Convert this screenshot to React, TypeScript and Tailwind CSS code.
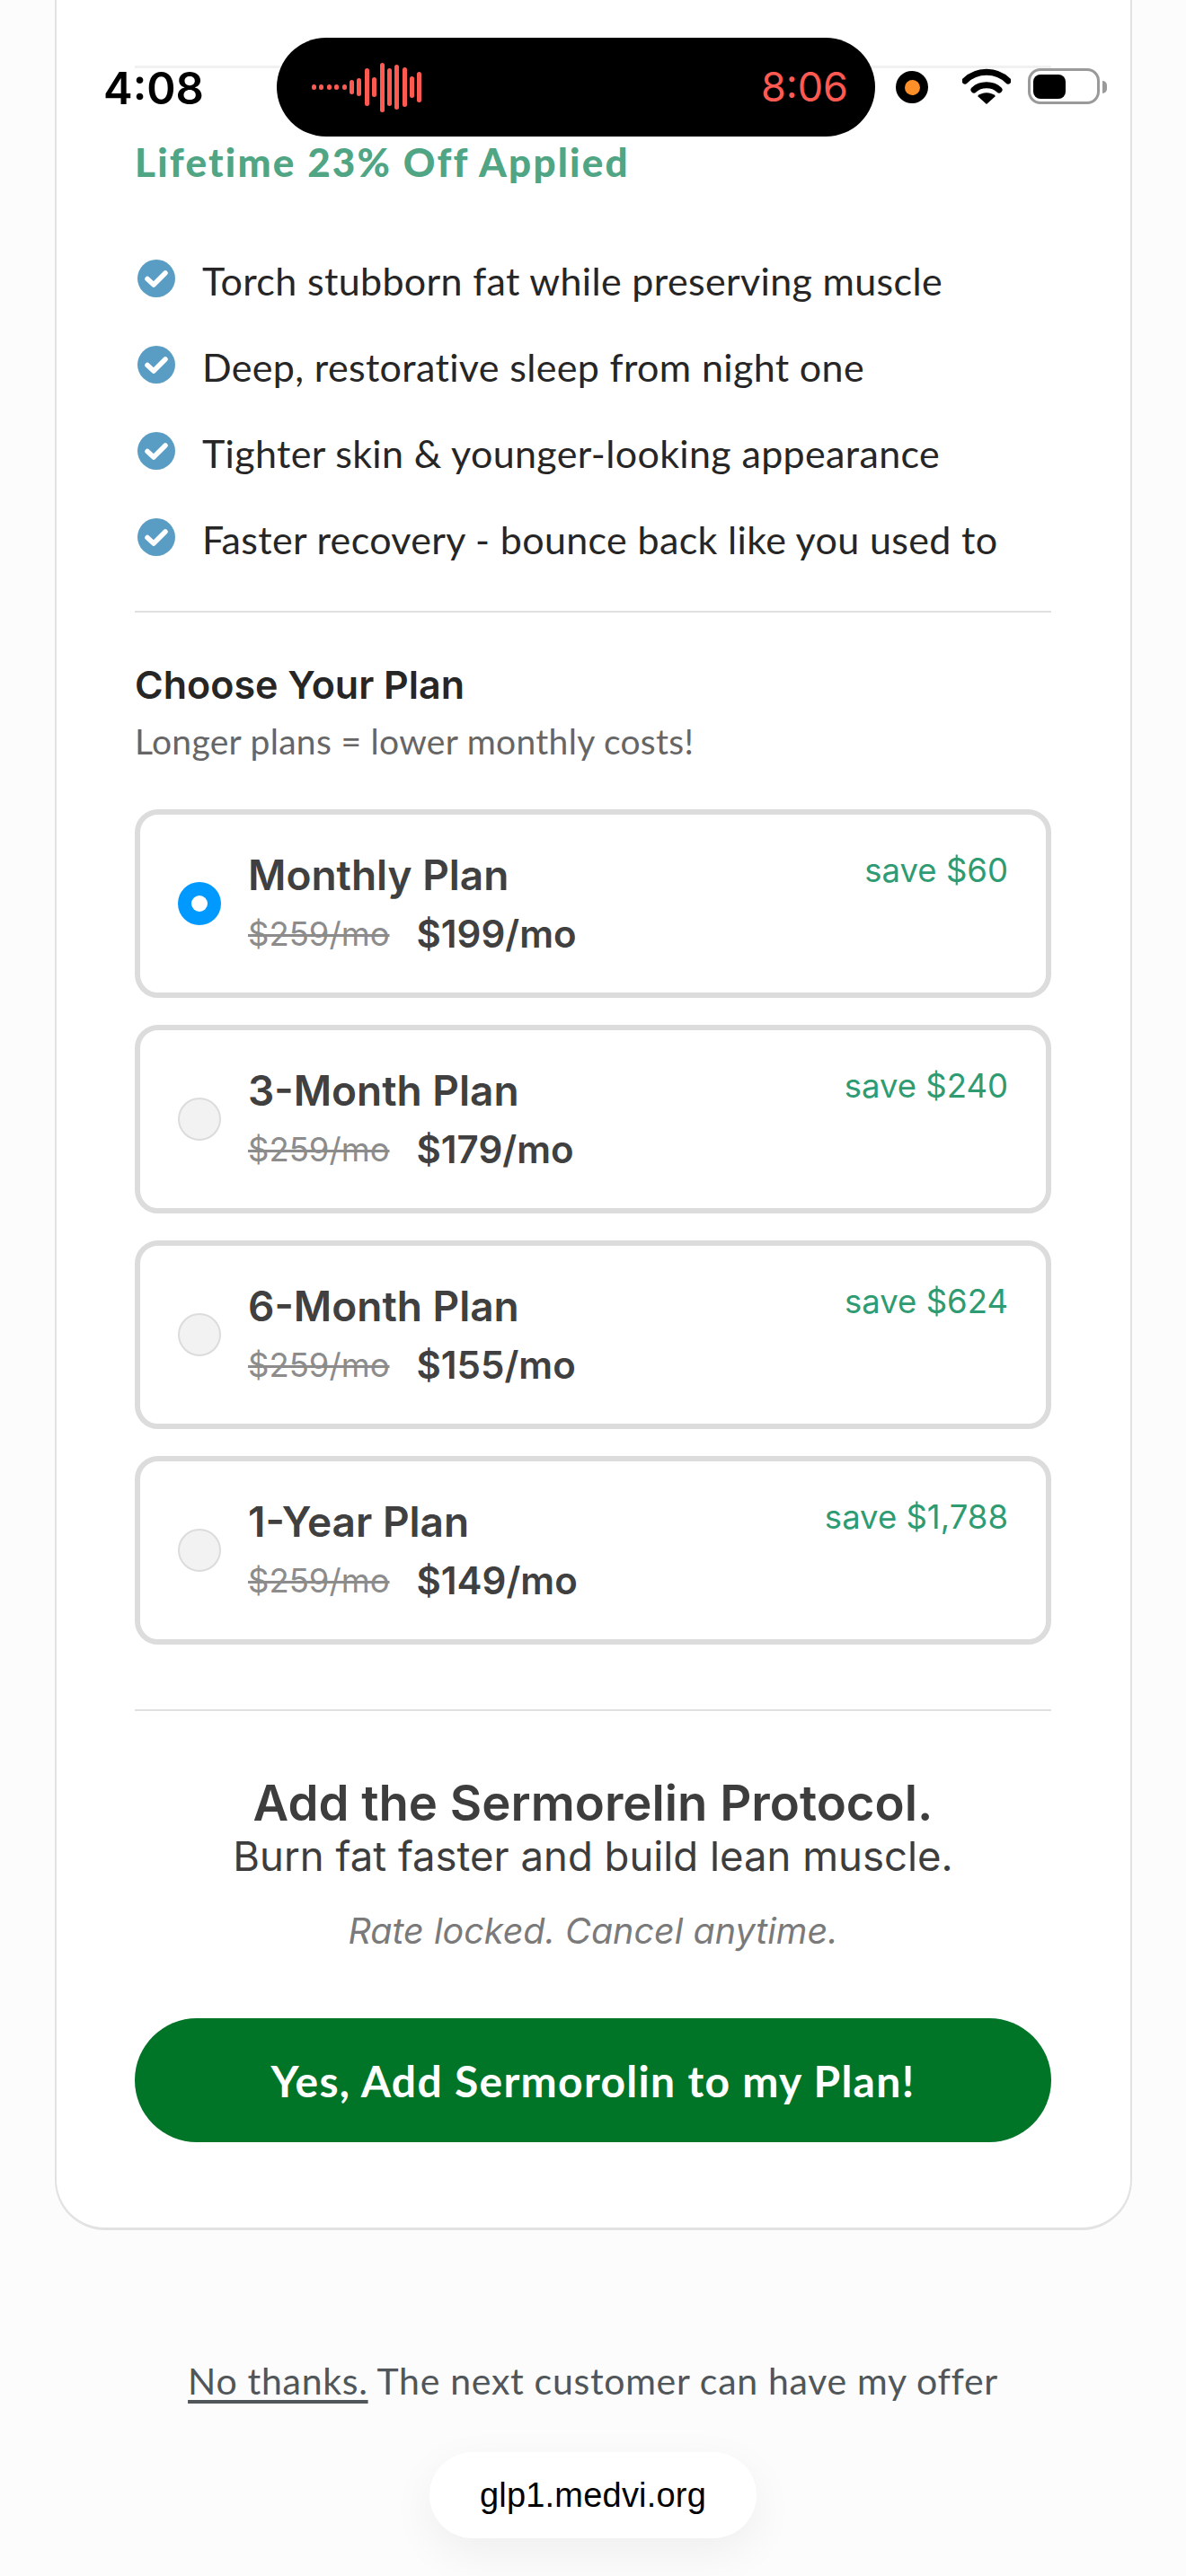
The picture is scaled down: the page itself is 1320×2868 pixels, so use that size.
import React from "react";

const benefits = [
  "Torch stubborn fat while preserving muscle",
  "Deep, restorative sleep from night one",
  "Tighter skin & younger-looking appearance",
  "Faster recovery - bounce back like you used to",
];

const plans = [
  { name: "Monthly Plan", price: "$199/mo", save: "save $60", on: true },
  { name: "3-Month Plan", price: "$179/mo", save: "save $240", on: false },
  { name: "6-Month Plan", price: "$155/mo", save: "save $624", on: false },
  { name: "1-Year Plan", price: "$149/mo", save: "save $1,788", on: false },
];

const bars = [20, 20, 20, 20, 20, 50, 60, 125, 65, 165, 125, 150, 130, 72, 100];

function Check() {
  return (
    <svg width="42" height="42" viewBox="0 0 42 42" className="shrink-0">
      <circle cx="21" cy="21" r="21" fill="#5a9dc4" />
      <path d="M11 21.5 L18 28 L31 15" fill="none" stroke="#fff" strokeWidth="5.5" strokeLinecap="round" strokeLinejoin="round" />
    </svg>
  );
}

function Wave() {
  return (
    <div className="flex items-center gap-[3.4px]">
      {bars.map((h, i) => (
        <div key={i} className="w-[5px] rounded-full bg-[#ff5a52]" style={{ height: h / 3 }} />
      ))}
    </div>
  );
}

function StatusBar() {
  return (
    <div className="absolute left-0 top-0 h-[152px] w-[1320px]">
      <div className="absolute left-[150px] top-[73px] h-[3px] w-[1020px] bg-[#f1f1f1]" />
      <div className="absolute left-[115px] top-[69px] text-[49px] leading-[60px] font-semibold text-black [font-family:Inter,sans-serif]">4:08</div>
      <div className="absolute left-[308px] top-[42px] flex h-[110px] w-[666px] items-center justify-between rounded-[55px] bg-black pl-[39px] pr-[30px]">
        <Wave />
        <span className="text-[45px] leading-[56px] text-[#ff5a52] [font-family:Inter,sans-serif]">8:06</span>
      </div>
      <div className="absolute left-[997px] top-[79px] flex h-[36px] w-[36px] items-center justify-center rounded-full bg-black">
        <div className="h-[17px] w-[17px] rounded-full bg-[#ff9029]" />
      </div>
      <svg className="absolute left-[1071px] top-[75px]" width="54" height="42" viewBox="0 0 54 42">
        <path d="M3 15 C16 2 38 2 51 15" fill="none" stroke="#000" strokeWidth="7" strokeLinecap="round" />
        <path d="M13 25 C20 18 34 18 41 25" fill="none" stroke="#000" strokeWidth="7" strokeLinecap="round" />
        <path d="M27 41 L17 32 C22 27 32 27 37 32 Z" fill="#000" />
      </svg>
      <div className="absolute left-[1144px] top-[76px] flex h-[40px] w-[80px] items-center rounded-[14px] border-[3px] border-[#9a9a9a] bg-white pl-[3px]">
        <div className="h-[27px] w-[36px] rounded-[8px] bg-black" />
      </div>
      <div className="absolute left-[1227px] top-[90px] h-[14px] w-[5px] rounded-r-full bg-[#9a9a9a]" />
    </div>
  );
}

function Plan({ name, price, save, on }: { name: string; price: string; save: string; on: boolean }) {
  return (
    <div className="flex h-[210px] items-center rounded-[26px] border-[6px] border-[#dcdcdc] bg-white pl-[42px] pr-[42px] [font-family:Inter,sans-serif]">
      {on ? (
        <div className="flex h-[48px] w-[48px] shrink-0 items-center justify-center rounded-full bg-[#0099ff]">
          <div className="h-[18px] w-[18px] rounded-full bg-white" />
        </div>
      ) : (
        <div className="h-[48px] w-[48px] shrink-0 rounded-full border-2 border-[#dcdcdc] bg-[#f2f2f2]" />
      )}
      <div className="ml-[30px] flex-1">
        <div className="text-[46px] leading-[52px] font-semibold text-[#404040]">{name}</div>
        <div className="mt-[15px] flex items-center gap-[30px] leading-[50px]">
          <span className="text-[36.5px] text-[#8c8c8c] line-through">$259/mo</span>
          <span className="text-[42px] font-semibold text-[#404040]">{price}</span>
        </div>
      </div>
      <div className="mb-auto mt-[38px] text-[36.5px] leading-[48px] text-[#2e9b72]">{save}</div>
    </div>
  );
}

export default function App() {
  return (
    <div className="relative h-[2868px] w-[1320px] overflow-hidden bg-[#fbfcfb]">
      <div className="ml-[61px] w-[1199px] rounded-b-[56px] border-x-2 border-b-[3px] border-[#e2e2e2] bg-white pb-[95px] pl-[87px] pr-[88px] pt-[152px]">
        <div className="text-[44px] leading-[56px] font-black tracking-[2.2px] text-[#4fa584] [font-family:Lato,sans-serif]">Lifetime 23% Off Applied</div>
        <div className="mt-[57px]">
          {benefits.map((b) => (
            <div key={b} className="flex h-[96px] items-center">
              <div className="mb-[6px] ml-[3px]"><Check /></div>
              <span className="ml-[30px] text-[43px] leading-[56px] tracking-[0.35px] text-[#262626] [font-family:Lato,sans-serif]">{b}</span>
            </div>
          ))}
        </div>
        <div className="mt-[31px] h-[2px] bg-[#e0e0e0]" />
        <div className="mt-[52px] text-[43px] leading-[56px] font-semibold text-[#262626] [font-family:Inter,sans-serif]">Choose Your Plan</div>
        <div className="mt-[10px] text-[39px] leading-[50px] tracking-[0.3px] text-[#666666] [font-family:Lato,sans-serif]">Longer plans = lower monthly costs!</div>
        <div className="mt-[51px] flex flex-col gap-[30px]">
          {plans.map((p) => (
            <Plan key={p.name} {...p} />
          ))}
        </div>
        <div className="mt-[72px] h-[2px] bg-[#e0e0e0]" />
        <div className="mt-[72px] text-center [font-family:Inter,sans-serif]">
          <div className="text-[54.5px] leading-[60px] font-semibold text-[#3d3d3d]">Add the Sermorelin Protocol.</div>
          <div className="mt-[2px] text-[45.5px] leading-[56px] text-[#3d3d3d]">Burn fat faster and build lean muscle.</div>
          <div className="mt-[30px] text-[39.5px] leading-[50px] italic text-[#7a7a7a]">Rate locked. Cancel anytime.</div>
        </div>
        <div className="mt-[72px] flex h-[138px] items-center justify-center rounded-full bg-[#007427] pt-[2px] text-[48px] font-bold tracking-[1.3px] text-white [font-family:Lato,sans-serif]">
          Yes, Add Sermorolin to my Plan!
        </div>
      </div>
      <div className="mt-[143px] text-center text-[41px] leading-[50px] tracking-[0.7px] text-[#50565a] [font-family:Lato,sans-serif]">
        <span className="underline underline-offset-[6px]">No thanks.</span> The next customer can have my offer
      </div>
      <div className="mx-auto mt-[54px] flex h-[96px] w-[364px] items-center justify-center rounded-[48px] bg-white text-[38px] tracking-[0.2px] text-black shadow-[0_16px_50px_rgba(0,0,0,0.06)] [font-family:'Liberation_Sans',sans-serif]">
        glp1.medvi.org
      </div>
      <StatusBar />
    </div>
  );
}
